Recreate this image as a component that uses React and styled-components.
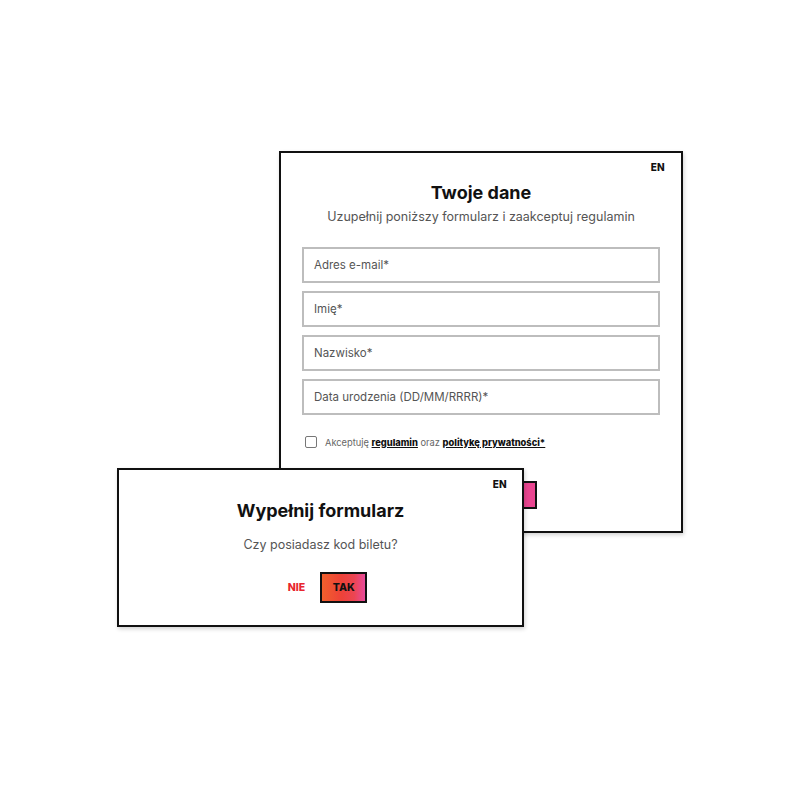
import React from 'react';
import styled, { createGlobalStyle } from 'styled-components';

const Global = createGlobalStyle`
  html, body {
    margin: 0;
    padding: 0;
    background: #fff;
  }
  * {
    box-sizing: border-box;
  }
`

const Canvas = styled.div`
  position: relative;
  width: 800px;
  height: 800px;
  font-family: Inter, "Noto Sans", sans-serif;
  color: #111;
`

const Card = styled.div`
  position: absolute;
  left: ${props => props.x}px;
  top: ${props => props.y}px;
  width: ${props => props.w}px;
  height: ${props => props.h}px;
  background: #fff;
  border: 2px solid #111;
  box-shadow: 1px 2px 4px rgba(0, 0, 0, 0.18);
  display: flex;
  flex-direction: column;
  align-items: center;
  padding: 8px ${props => props.pad}px 0;
`

const LangRow = styled.div`
  align-self: stretch;
  display: flex;
  justify-content: flex-end;
  margin-right: ${props => props.shift}px;
  height: 12px;
`

const Lang = styled.span`
  font-size: 10px;
  line-height: 12px;
  font-weight: 800;
  letter-spacing: 0.3px;
`

const Title = styled.h2`
  margin: ${props => props.gap}px 0 0;
  font-size: 18px;
  line-height: 24px;
  font-weight: 700;
`

const Subtitle = styled.p`
  margin: ${props => props.gap}px 0 0;
  font-size: 12.5px;
  line-height: 18px;
  color: #555;
`

const Fields = styled.div`
  align-self: stretch;
  display: flex;
  flex-direction: column;
  gap: 8px;
  margin-top: 21px;
`

const Field = styled.div`
  height: 36px;
  border: 2px solid #bdbdbd;
  display: flex;
  align-items: center;
  padding: 0 10px;
  font-size: 11.5px;
  color: #555;
`

const Consent = styled.label`
  align-self: stretch;
  display: flex;
  align-items: center;
  gap: 8px;
  margin-top: 20px;
  margin-left: 3px;
  height: 14px;
  font-size: 9.3px;
  color: #666;
`

const Box = styled.span`
  width: 12px;
  height: 12px;
  border: 1.5px solid #777;
  border-radius: 2px;
  flex: 0 0 12px;
`

const Link = styled.a`
  color: #111;
  font-weight: 800;
  text-decoration: underline;
  text-underline-offset: 1px;
`

const Gradient = styled.button`
  border: 2px solid #111;
  background: linear-gradient(90deg, #f0602c 0%, #ee4238 45%, #ec4552 75%, #e84b9c 100%);
  font-family: inherit;
  font-weight: 800;
  font-size: 10.5px;
  color: #111;
  padding: 0;
`

const Submit = styled(Gradient)`
  margin-top: 32px;
  width: 112px;
  height: 28px;
  background: #e94590;
`

const Choice = styled.div`
  display: flex;
  align-items: center;
  gap: 15px;
  margin-top: 18px;
  padding-left: 14px;
`

const No = styled.button`
  border: none;
  background: none;
  padding: 0;
  font-family: inherit;
  font-size: 10.5px;
  font-weight: 800;
  color: #e8262e;
`

const Yes = styled(Gradient)`
  width: 47px;
  height: 31px;
`

export default function App() {
  return (
    <>
      <Global />
      <Canvas>
        <Card x={279} y={151} w={404} h={382} pad={21}>
          <LangRow shift={-5}><Lang>EN</Lang></LangRow>
          <Title gap={8}>Twoje dane</Title>
          <Subtitle gap={3}>Uzupełnij poniższy formularz i zaakceptuj regulamin</Subtitle>
          <Fields>
            <Field>Adres e-mail*</Field>
            <Field>Imię*</Field>
            <Field>Nazwisko*</Field>
            <Field>Data urodzenia (DD/MM/RRRR)*</Field>
          </Fields>
          <Consent>
            <Box />
            <span>Akceptuję <Link>regulamin</Link> oraz <Link>politykę prywatności*</Link></span>
          </Consent>
          <Submit>WYŚLIJ</Submit>
        </Card>
        <Card x={117} y={468} w={407} h={159} pad={15}>
          <LangRow shift={0}><Lang>EN</Lang></LangRow>
          <Title gap={9}>Wypełnij formularz</Title>
          <Subtitle gap={13}>Czy posiadasz kod biletu?</Subtitle>
          <Choice>
            <No>NIE</No>
            <Yes>TAK</Yes>
          </Choice>
        </Card>
      </Canvas>
    </>
  )
}
